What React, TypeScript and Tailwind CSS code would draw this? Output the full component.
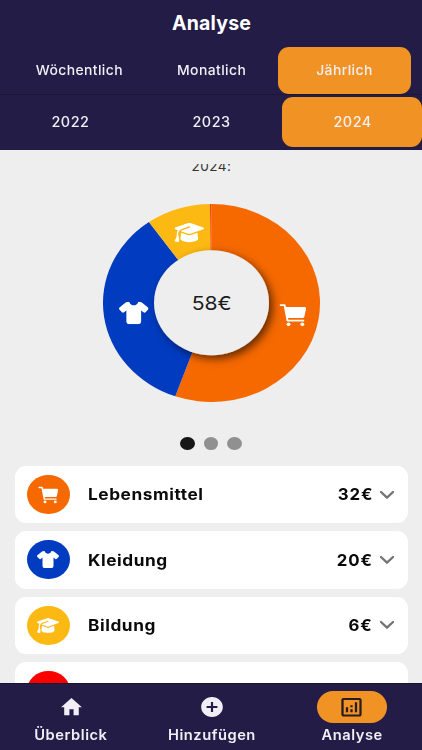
import React from "react";
import { FaShirt, FaGraduationCap } from "react-icons/fa6";
import { IoCart } from "react-icons/io5";
import { MdHome, MdAddCircle, MdOutlineAnalytics } from "react-icons/md";

const categories = [
  { name: "Lebensmittel", amount: "32€", color: "bg-[#f66800]", Icon: IoCart, size: "h-[22px] w-[23.4px]" },
  { name: "Kleidung", amount: "20€", color: "bg-[#003bc0]", Icon: FaShirt, size: "h-[17px] w-[22px]" },
  { name: "Bildung", amount: "6€", color: "bg-[#fdb913]", Icon: FaGraduationCap, size: "h-[17px] w-[22px]" },
];

const CX = 108.5;
const CY = 99;

function slice(from: number, to: number) {
  const point = (deg: number) => {
    const a = (deg * Math.PI) / 180;
    return `${CX + 108.5 * Math.sin(a)} ${CY - 99 * Math.cos(a)}`;
  };
  return `M${CX} ${CY} L${point(from)} A108.5 99 0 ${to - from > 180 ? 1 : 0} 1 ${point(to)} Z`;
}

function Donut() {
  return (
    <svg className="block h-[198px] w-[217px]" viewBox="0 0 217 198">
      <defs>
        <filter id="shade" x="-30%" y="-30%" width="170%" height="170%">
          <feDropShadow dx="3.5" dy="3.5" stdDeviation="4.5" floodColor="#000" floodOpacity="0.6" />
        </filter>
      </defs>
      <path d={slice(0, 199.5)} fill="#f66800" />
      <path d={slice(199.5, 324.8)} fill="#003bc0" />
      <path d={slice(324.8, 359.4)} fill="#fdb913" />
      <path d={slice(359.2, 360)} fill="#ff3b00" />
      <ellipse cx={CX} cy={CY - 0.3} rx="57.5" ry="52.5" fill="#eeeeee" filter="url(#shade)" />
      <FaGraduationCap className="h-[22px] w-[29.5px]" x="71.5" y="17.5" preserveAspectRatio="none" color="#fff" />
      <FaShirt className="h-[22.5px] w-[29.5px]" x="16" y="97.8" preserveAspectRatio="none" color="#fff" />
      <IoCart className="h-[29.3px] w-[31.5px]" x="174.7" y="96.5" preserveAspectRatio="none" color="#fff" />
      <text x="108.7" y="106" textAnchor="middle" fontSize="19" textLength="40" lengthAdjust="spacingAndGlyphs" fill="#1c1c1c">58€</text>
    </svg>
  );
}

export default function App() {
  return (
    <div className="flex h-[750px] w-[422px] flex-col overflow-hidden bg-[#eeeeee] font-['Inter',sans-serif]">
      <header className="h-[150px] shrink-0 bg-[#231c46] text-white">
        <h1 className="flex h-[46px] items-center justify-center pt-[2px] pl-[1px] text-[19.5px] font-bold tracking-[0.2px]">Analyse</h1>
        <div className="flex h-[49px] items-center border-b border-[#1c1638] pr-[11px] pl-[13px] text-[13.5px] font-medium tracking-[0.4px] text-[#f1eff7]">
          <div className="flex h-full flex-1 items-center justify-center"><span className="scale-x-[1.03]">Wöchentlich</span></div>
          <div className="flex h-full flex-1 items-center justify-center"><span className="scale-x-[1.03]">Monatlich</span></div>
          <div className="h-[48px] flex-1 pt-[1px]">
            <div className="flex h-[47px] items-center justify-center rounded-[11px] bg-[#f19324]"><span className="scale-x-[1.03]">Jährlich</span></div>
          </div>
        </div>
        <div className="grid h-[55px] grid-cols-3 pt-[2px] pl-[1px] text-[14px] font-medium tracking-[0.5px] text-[#f1eff7]">
          <div className="flex h-[50px] items-center justify-center pr-[1px] pb-[2px]"><span className="scale-x-[1.03]">2022</span></div>
          <div className="flex h-[50px] items-center justify-center pb-[2px]"><span className="scale-x-[1.03]">2023</span></div>
          <div className="flex h-[50px] items-center justify-center rounded-[11px] bg-[#f19324] pb-[2px] pl-[1px]"><span className="scale-x-[1.03]">2024</span></div>
        </div>
      </header>

      <main className="flex min-h-0 flex-1 flex-col items-center overflow-hidden">
        <div className="mt-[14px] flex h-[10px] w-full shrink-0 items-end justify-center overflow-hidden pl-[1px] text-[13.5px] leading-[16px] tracking-[0.5px] text-[#333]">
          <span>2024:</span>
        </div>
        <div className="mt-[30px] shrink-0 pl-[0.5px]">
          <Donut />
        </div>
        <div className="mt-[35px] flex h-[13px] shrink-0 gap-[9px]">
          <span className="h-[13px] w-[14.5px] rounded-[50%] bg-[#161616]" />
          <span className="h-[13px] w-[14.5px] rounded-[50%] bg-[#909090]" />
          <span className="h-[13px] w-[14.5px] rounded-[50%] bg-[#909090]" />
        </div>
        <div className="mt-[16px] flex w-full shrink-0 flex-col gap-[8px] pr-[14px] pl-[15px]">
          {categories.map(({ name, amount, color, Icon, size }) => (
            <div key={name} className="flex h-[57.3px] items-center rounded-[11px] bg-white pr-[13px] pl-[12px]">
              <span className={`flex h-[39px] w-[42.5px] items-center justify-center rounded-[50%] text-white ${color}`}>
                <Icon className={size} preserveAspectRatio="none" />
              </span>
              <span className="ml-[18.5px] flex-1 origin-left scale-x-[1.1] pt-[1px] text-[15.7px] font-bold tracking-[0.5px] text-[#0a0a0a]">{name}</span>
              <span className="origin-right scale-x-[1.07] pt-[1px] text-[15.7px] font-bold tracking-[0.9px] text-[#0a0a0a]">{amount}</span>
              <svg className="ml-[6px] h-[10px] w-[16px]" viewBox="0 0 16 10" fill="none" stroke="#737373" strokeWidth="2.3" strokeLinecap="round" strokeLinejoin="round">
                <path d="M2 2 L8 7.7 L14 2" />
              </svg>
            </div>
          ))}
          <div className="h-[57px] rounded-[11px] bg-white pt-[9px] pl-[12px]">
            <span className="block h-[39px] w-[42.5px] rounded-[50%] bg-[#fb0000]" />
          </div>
        </div>
      </main>

      <nav className="grid h-[67px] shrink-0 grid-cols-3 border-t border-[#19132f] bg-[#231c46] pt-[7px] pl-[1.5px] text-[14px] font-semibold tracking-[0.5px] text-[#f1eff5]">
        <div className="flex flex-col items-center">
          <span className="flex h-[32px] items-center pr-[1px]"><MdHome className="h-[24.4px] w-[25px]" preserveAspectRatio="none" /></span>
          <span className="mt-[2px] scale-x-[1.05] pr-[1px] leading-[20px]">Überblick</span>
        </div>
        <div className="flex flex-col items-center">
          <span className="flex h-[32px] items-center"><MdAddCircle className="h-[24px] w-[26px]" preserveAspectRatio="none" /></span>
          <span className="mt-[2px] scale-x-[1.05] leading-[20px]">Hinzufügen</span>
        </div>
        <div className="flex flex-col items-center">
          <span className="flex h-[32px] w-[70px] items-center justify-center rounded-full bg-[#f19324] text-[#251b20]"><MdOutlineAnalytics className="h-[24.5px] w-[27px]" preserveAspectRatio="none" /></span>
          <span className="mt-[2px] scale-x-[1.05] leading-[20px]">Analyse</span>
        </div>
      </nav>
    </div>
  );
}
